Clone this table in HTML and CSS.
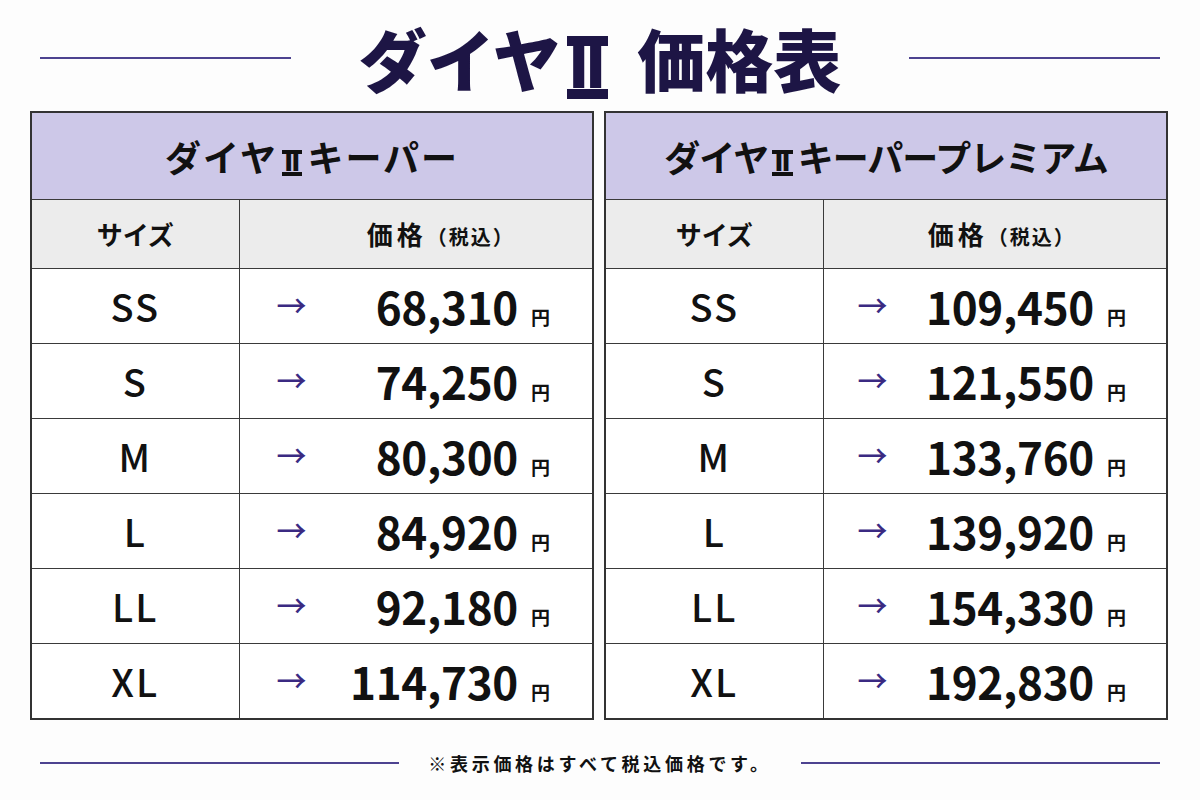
FILE: index.html
```html
<!DOCTYPE html>
<html lang="ja">
<head>
<meta charset="utf-8">
<title>ダイヤⅡ 価格表</title>
<link rel="stylesheet" href="styles.css">
</head>
<body>
<div class="page">
  <header class="title-row">
    <span class="rule"></span>
    <h1 class="title">ダイヤ<span class="roman">Ⅱ</span> 価格表</h1>
    <span class="rule"></span>
  </header>

  <main class="tables">
    <table class="price-table table-a">
      <colgroup><col class="col-size"><col class="col-price"></colgroup>
      <thead>
        <tr><th colspan="2" class="product">ダイヤ<span class="roman">Ⅱ</span>キーパー</th></tr>
        <tr class="sub"><th>サイズ</th><th class="sub-price"><span class="kakaku">価格</span><span class="tax">（税込）</span></th></tr>
      </thead>
      <tbody>
        <tr><td class="size">SS</td><td><div class="price"><span class="arrow">→</span><span class="amount">68,310</span><span class="yen">円</span></div></td></tr>
        <tr><td class="size">S</td><td><div class="price"><span class="arrow">→</span><span class="amount">74,250</span><span class="yen">円</span></div></td></tr>
        <tr><td class="size">M</td><td><div class="price"><span class="arrow">→</span><span class="amount">80,300</span><span class="yen">円</span></div></td></tr>
        <tr><td class="size">L</td><td><div class="price"><span class="arrow">→</span><span class="amount">84,920</span><span class="yen">円</span></div></td></tr>
        <tr><td class="size">LL</td><td><div class="price"><span class="arrow">→</span><span class="amount">92,180</span><span class="yen">円</span></div></td></tr>
        <tr><td class="size">XL</td><td><div class="price"><span class="arrow">→</span><span class="amount">114,730</span><span class="yen">円</span></div></td></tr>
      </tbody>
    </table>

    <table class="price-table table-b">
      <colgroup><col class="col-size"><col class="col-price"></colgroup>
      <thead>
        <tr><th colspan="2" class="product">ダイヤ<span class="roman">Ⅱ</span>キーパープレミアム</th></tr>
        <tr class="sub"><th>サイズ</th><th class="sub-price"><span class="kakaku">価格</span><span class="tax">（税込）</span></th></tr>
      </thead>
      <tbody>
        <tr><td class="size">SS</td><td><div class="price"><span class="arrow">→</span><span class="amount">109,450</span><span class="yen">円</span></div></td></tr>
        <tr><td class="size">S</td><td><div class="price"><span class="arrow">→</span><span class="amount">121,550</span><span class="yen">円</span></div></td></tr>
        <tr><td class="size">M</td><td><div class="price"><span class="arrow">→</span><span class="amount">133,760</span><span class="yen">円</span></div></td></tr>
        <tr><td class="size">L</td><td><div class="price"><span class="arrow">→</span><span class="amount">139,920</span><span class="yen">円</span></div></td></tr>
        <tr><td class="size">LL</td><td><div class="price"><span class="arrow">→</span><span class="amount">154,330</span><span class="yen">円</span></div></td></tr>
        <tr><td class="size">XL</td><td><div class="price"><span class="arrow">→</span><span class="amount">192,830</span><span class="yen">円</span></div></td></tr>
      </tbody>
    </table>
  </main>

  <footer class="note-row">
    <span class="rule"></span>
    <p class="note">※表示価格はすべて税込価格です。</p>
    <span class="rule"></span>
  </footer>
</div>
</body>
</html>
```

FILE: styles.css
```css
* { box-sizing: border-box; }

html, body {
  margin: 0;
  padding: 0;
  background: #fdfdfd;
}

body {
  font-family: "Noto Sans CJK JP", "Noto Sans", sans-serif;
  color: #111;
  width: 1200px;
  height: 800px;
  overflow: hidden;
}

.page {
  display: flex;
  flex-direction: column;
}

/* Roman numeral II drawn with top and bottom bars */
.roman {
  display: inline-block;
  font-family: "DejaVu Sans", sans-serif;
  font-weight: 700;
  line-height: 0.73em;
  border-top: 4px solid currentColor;
  border-bottom: 4px solid currentColor;
  letter-spacing: 0;
  position: relative;
}

/* ---- Title ---- */
.title-row {
  display: flex;
  align-items: center;
  height: 92px;
  padding: 24px 40px 0 40px;
  gap: 68px;
}

.title-row .rule,
.note-row .rule {
  flex: 1;
  height: 2px;
  background: #4d4390;
}

.title {
  margin: 0;
  height: 68px;
  font-size: 68px;
  line-height: 68px;
  font-weight: 900;
  color: #1d1545;
  white-space: nowrap;
}

.title .roman {
  font-size: 59px;
  border-top-width: 10px;
  border-bottom-width: 10px;
  padding: 0 1px;
  margin: 0 14px 0 6px;
  top: 1px;
}

/* ---- Tables ---- */
.tables {
  display: flex;
  gap: 10px;
  padding: 0 32px 0 30px;
  margin-top: 19px;
}

.price-table {
  width: 564px;
  border-collapse: collapse;
  border: 2px solid #333;
  table-layout: fixed;
}

.table-a .col-size { width: 208px; }
.table-b .col-size { width: 218px; }

.price-table th,
.price-table td {
  border: 1px solid #3a3a3a;
  padding: 0;
}

.product {
  height: 87px;
  background: #cdc8e8;
  font-size: 36px;
  font-weight: 700;
  text-align: center;
  color: #111;
}

.product .roman {
  font-size: 25px;
  border-top-width: 4px;
  border-bottom-width: 4px;
  padding: 0 2px;
  margin: 0 5px 0 4px;
  top: -1px;
}

.table-a .product { letter-spacing: 2px; }
.table-b .product { letter-spacing: -1px; }

.sub th {
  height: 69px;
  background: #ececec;
  font-size: 26px;
  font-weight: 700;
  text-align: center;
}

.table-a .sub-price { padding-left: 50px; }
.table-b .sub-price { padding-left: 14px; }

.kakaku {
  letter-spacing: 4px;
}

.tax {
  font-size: 20px;
  letter-spacing: 2px;
}

.price-table tbody td {
  height: 75px;
  background: #fff;
}

.size {
  text-align: center;
  font-size: 38px;
  font-weight: 500;
  letter-spacing: 2px;
}

.price {
  display: flex;
  align-items: baseline;
  padding: 0 42px 0 37px;
}

.table-b .price {
  padding: 0 40px 0 34px;
}

.arrow {
  color: #3b2a82;
  font-size: 30px;
  font-weight: 500;
  align-self: center;
  line-height: 1;
  position: relative;
  top: -2px;
}

.amount {
  margin-left: auto;
  font-size: 44px;
  line-height: 74px;
  font-weight: 700;
  letter-spacing: -0.3px;
}

.yen {
  font-size: 19px;
  font-weight: 700;
  margin-left: 13px;
}

/* ---- Footer note ---- */
.note-row {
  display: flex;
  align-items: center;
  padding: 0 40px;
  gap: 29px;
  margin-top: 31px;
}

.note {
  margin: 0;
  font-size: 18px;
  line-height: 24px;
  font-weight: 700;
  letter-spacing: 3.7px;
  color: #111;
  white-space: nowrap;
}
```
